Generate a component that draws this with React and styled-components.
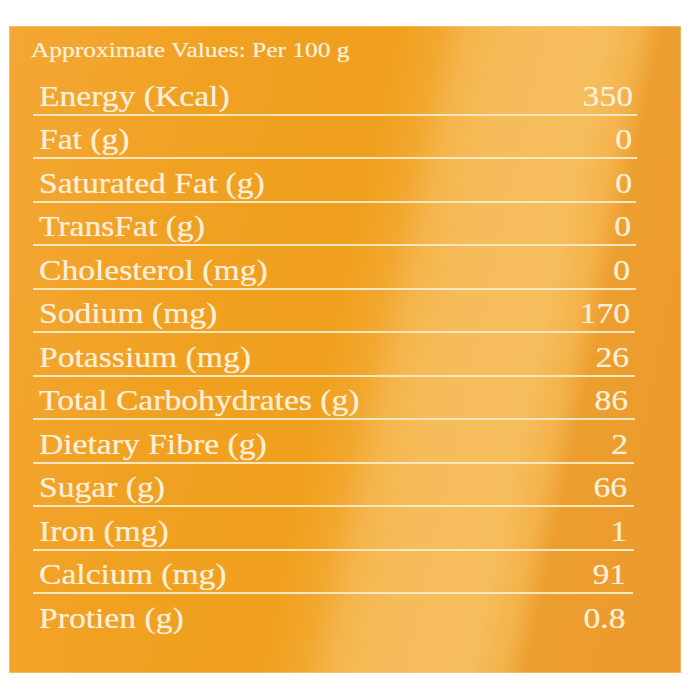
import React from 'react';
import styled, { createGlobalStyle } from 'styled-components';

const GlobalStyle = createGlobalStyle`
  html, body {
    margin: 0;
    padding: 0;
    background: #ffffff;
  }
`

const Page = styled.div`
  padding: 26px 9px 27px 9px;
`

const Panel = styled.div`
  width: 672px;
  height: 647px;
  box-sizing: border-box;
  padding-top: 12.7px;
  font-family: "Liberation Serif", "Times New Roman", serif;
  color: #fcefd8;
  text-shadow: 0 0 0.8px rgba(252, 239, 216, 0.7);
  background: linear-gradient(
    102deg,
    #f3a835 0%,
    #f1a122 25%,
    #f0a01d 48%,
    #f2a72e 53%,
    #f5b54c 57%,
    #f6bc5a 62%,
    #f6bd5c 74%,
    #f4b24a 78%,
    #ec9e2e 81%,
    #ea9a2a 100%
  );
  box-shadow: inset 0 0 0 1px rgba(250, 205, 130, 0.55);
`

const Heading = styled.div`
  padding-left: 22px;
  font-size: 22px;
  line-height: 22px;
  margin-bottom: 11.8px;
  span {
    display: inline-block;
    transform: scaleX(1.155);
    transform-origin: left center;
  }
`

const Table = styled.div`
  display: flex;
  flex-direction: column;
  margin: 0 44px 0 24px;
`

const Row = styled.div`
  display: flex;
  justify-content: space-between;
  align-items: flex-end;
  box-sizing: content-box;
  padding-left: 6px;
  padding-right: ${(p) => 4 + p.$i * 0.3}px;
  margin-right: ${(p) => p.$i * 0.35}px;
  padding-bottom: 3px;
  height: 38.5px;
  border-bottom: ${(p) => (p.$last ? 'none' : '2px solid #fbe6c2')};
  font-size: 30px;
  line-height: 30px;
`

const Label = styled.span`
  display: inline-block;
  transform: scaleX(1.12);
  transform-origin: left bottom;
`

const Value = styled.span`
  display: inline-block;
  transform: scaleX(1.12);
  transform-origin: right bottom;
`

const rows = [
  ['Energy (Kcal)', '350'],
  ['Fat (g)', '0'],
  ['Saturated Fat (g)', '0'],
  ['TransFat (g)', '0'],
  ['Cholesterol (mg)', '0'],
  ['Sodium (mg)', '170'],
  ['Potassium (mg)', '26'],
  ['Total Carbohydrates (g)', '86'],
  ['Dietary Fibre (g)', '2'],
  ['Sugar (g)', '66'],
  ['Iron (mg)', '1'],
  ['Calcium (mg)', '91'],
  ['Protien (g)', '0.8'],
]

const App = () => {
  return (
    <>
      <GlobalStyle />
      <Page>
        <Panel>
          <Heading><span>Approximate Values: Per 100 g</span></Heading>
          <Table>
            {rows.map(([label, value], i) => (
              <Row key={label} $i={i} $last={i === rows.length - 1}>
                <Label>{label}</Label>
                <Value>{value}</Value>
              </Row>
            ))}
          </Table>
        </Panel>
      </Page>
    </>
  )
}

export default App
